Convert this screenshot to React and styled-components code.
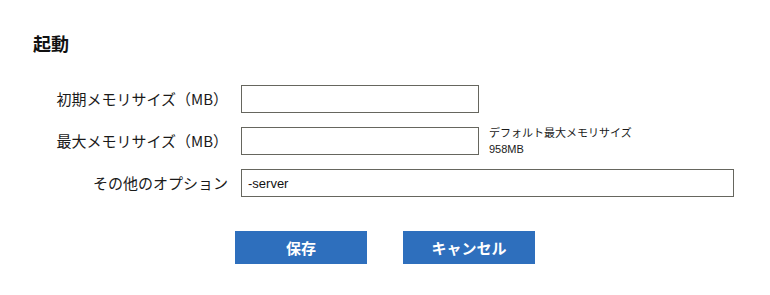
import React from "react";
import styled, { createGlobalStyle } from "styled-components";

const Global = createGlobalStyle`
  html, body { margin: 0; padding: 0; background: #fff; }
  body { font-family: "Noto Sans CJK JP", "Noto Sans", sans-serif; color: #222; }
`;

const Page = styled.div`
  width: 770px;
  height: 295px;
  box-sizing: border-box;
  padding: 30px 0 0 33px;
`;

const Heading = styled.h2`
  margin: 0;
  font-size: 18px;
  line-height: 26px;
  font-weight: 700;
  color: #111;
`;

const Form = styled.div`
  margin-top: 29px;
  display: flex;
  flex-direction: column;
  gap: 14px;
`;

const Row = styled.div`
  display: flex;
  align-items: center;
  height: 28px;
`;

const Label = styled.label`
  width: 195px;
  margin-right: 13px;
  text-align: right;
  font-size: 15px;
  line-height: 28px;
  color: #1a1a1a;
  white-space: nowrap;
`;

const Input = styled.input`
  box-sizing: border-box;
  width: ${(p) => p.$w}px;
  height: 28px;
  border: 1px solid #66665e;
  border-radius: 0;
  padding: 0 6px;
  font-family: "Liberation Sans", Arial, sans-serif;
  font-size: 13px;
  color: #111;
  outline: none;
`;

const Hint = styled.div`
  margin-left: 10px;
  font-size: 11px;
  line-height: 17px;
  color: #1a1a1a;
`;

const HintValue = styled.div`
  font-family: "Liberation Sans", Arial, sans-serif;
  font-size: 11px;
`;

const Buttons = styled.div`
  display: flex;
  justify-content: center;
  gap: 36px;
  margin: 34px 0 0 -33px;
`;

const Button = styled.button`
  width: 132px;
  height: 33px;
  border: none;
  background: #2e6fbd;
  color: #fff;
  font-family: "Noto Sans CJK JP", sans-serif;
  font-size: 15px;
  font-weight: 700;
  cursor: pointer;
  padding: 0;
`;

export default function App() {
  return (
    <Page>
      <Global />
      <Heading>起動</Heading>
      <Form>
        <Row>
          <Label>初期メモリサイズ（MB）</Label>
          <Input $w={238} defaultValue="" />
        </Row>
        <Row>
          <Label>最大メモリサイズ（MB）</Label>
          <Input $w={238} defaultValue="" />
          <Hint>
            <div>デフォルト最大メモリサイズ</div>
            <HintValue>958MB</HintValue>
          </Hint>
        </Row>
        <Row>
          <Label>その他のオプション</Label>
          <Input $w={493} defaultValue="-server" />
        </Row>
      </Form>
      <Buttons>
        <Button>保存</Button>
        <Button>キャンセル</Button>
      </Buttons>
    </Page>
  );
}
